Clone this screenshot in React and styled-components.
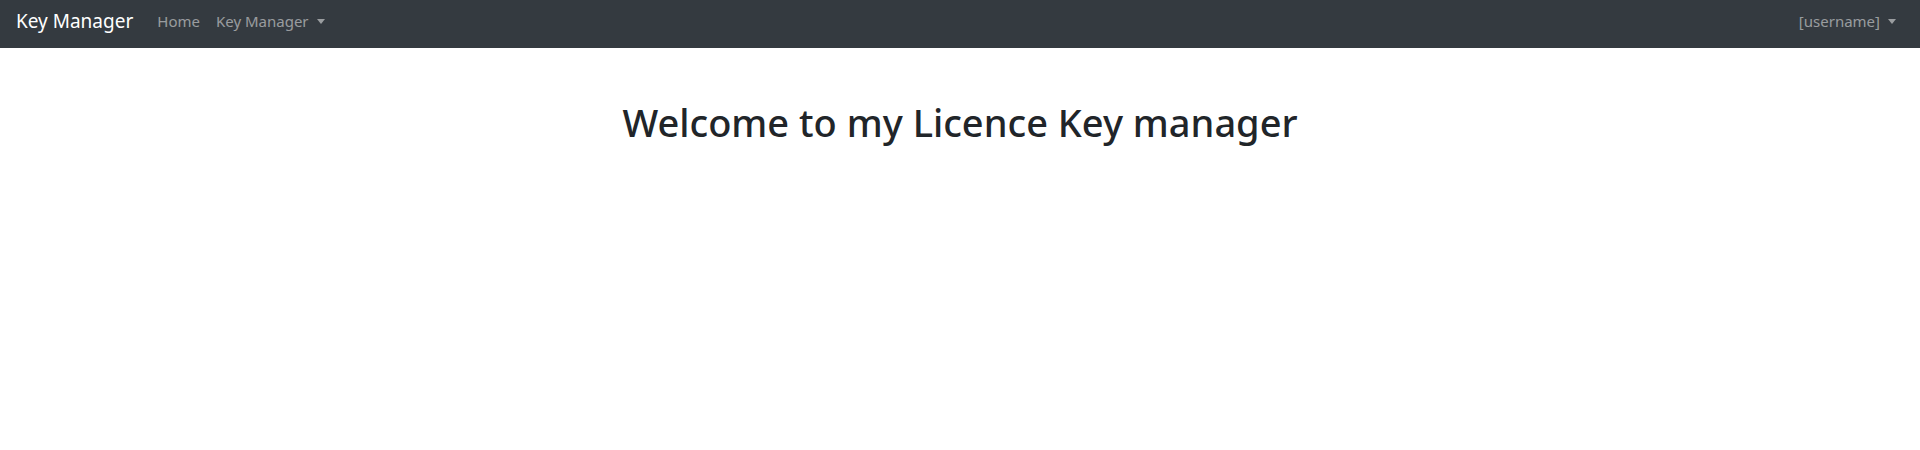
import React from "react";
import styled, { createGlobalStyle } from "styled-components";

const Global = createGlobalStyle`
  body {
    margin: 0;
    font-family: "Noto Sans", "Open Sans", sans-serif;
    color: #212529;
    background: #fff;
  }
`;

const App = () => {
  return (
    <div>
      <Global />
      <Navbar>
        <Brand>Key Manager</Brand>
        <NavList>
          <NavLink>Home</NavLink>
          <NavLink caret>Key Manager</NavLink>
        </NavList>
        <NavRight>
          <NavLink caret>[username]</NavLink>
        </NavRight>
      </Navbar>
      <Main>
        <Title>Welcome to my Licence Key manager</Title>
      </Main>
    </div>
  );
};

export default App;

const Navbar = styled.nav`
  display: flex;
  align-items: center;
  height: 48px;
  padding: 0 16px 6px;
  background: #343a40;
  box-sizing: border-box;
`

const Brand = styled.a`
  font-size: 19px;
  color: #fff;
  margin-right: 16px;
  white-space: nowrap;
`

const NavList = styled.div`
  display: flex;
  align-items: center;
`

const NavRight = styled.div`
  display: flex;
  align-items: center;
  margin-left: auto;
`

const NavLink = styled.a`
  font-size: 15px;
  color: rgba(255, 255, 255, 0.5);
  padding: 0 8px;
  white-space: nowrap;
  &::after {
    content: ${(p) => (p.caret ? '""' : "none")};
    display: inline-block;
    margin-left: 8px;
    vertical-align: 3px;
    border-top: 5px solid;
    border-right: 4px solid transparent;
    border-left: 4px solid transparent;
  }
`

const Main = styled.main`
  display: flex;
  justify-content: center;
  padding-top: 52px;
`

const Title = styled.h1`
  margin: 0;
  font-size: 38px;
  font-weight: 500;
  line-height: 1.2;
  color: #212529;
`
